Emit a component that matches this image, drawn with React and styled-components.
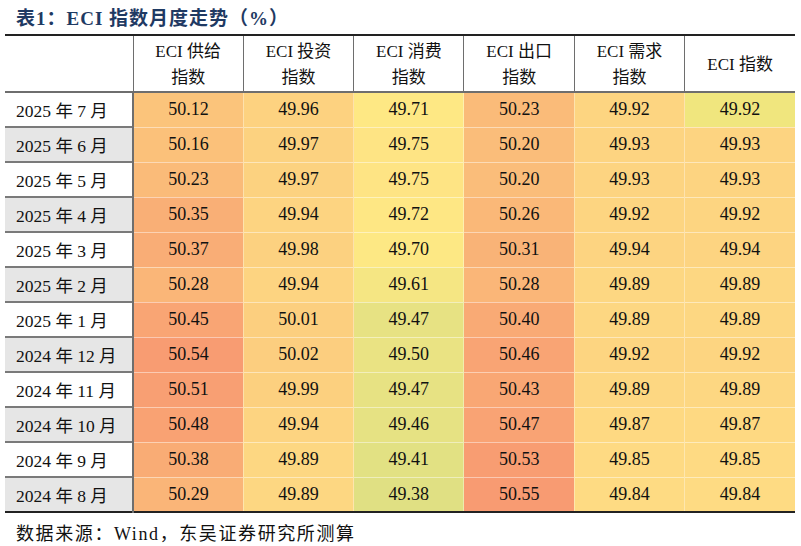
import React from 'react'
import styled, { createGlobalStyle } from 'styled-components'

const GlobalStyle = createGlobalStyle`
    body {
        margin: 0;
        background: #ffffff;
        font-family: "Liberation Serif", "Noto Sans CJK SC", serif;
        color: #111;
    }
`

const Page = styled.div`
    width: 801px;
    height: 546px;
    padding: 0 6px 0 5px;
    box-sizing: border-box;
`

const Title = styled.h1`
    margin: 0;
    height: 32px;
    padding: 0 0 2px 11px;
    display: flex;
    align-items: center;
    font-size: 19px;
    font-weight: bold;
    color: #1f3a63;
    letter-spacing: 1px;
`

const Table = styled.table`
    width: 790px;
    border-collapse: collapse;
    table-layout: fixed;
    border-top: 2px solid #222;
    border-bottom: 2px solid #222;
`

const HeadCell = styled.th`
    height: 57px;
    padding: 2px 0 0;
    box-sizing: border-box;
    font-weight: normal;
    font-size: 17px;
    line-height: 26px;
    text-align: center;
    border-bottom: 2px solid #6e6e6e;
    border-left: ${(p) => (p.$first ? 'none' : '1.5px solid #6e6e6e')};
`

const LabelCell = styled.td`
    height: 33px;
    padding: 0 0 0 11px;
    font-size: 17.5px;
    white-space: nowrap;
    background: ${(p) => (p.$shaded ? '#e6e6e6' : '#ffffff')};
    border-top: ${(p) => (p.$top ? 'none' : '2px solid #7a7a7a')};
    border-right: 2px solid #6e6e6e;
`

const ValueCell = styled.td`
    height: 33px;
    padding: 0;
    font-size: 18px;
    text-align: center;
    background: ${(p) => p.$bg};
    border-top: ${(p) => (p.$top ? 'none' : '1px solid rgba(255,255,255,0.45)')};
    border-left: 1px solid rgba(255,255,255,0.35);
`

const Source = styled.div`
    padding: 6px 0 0 11px;
    font-size: 18px;
    letter-spacing: 1.6px;
`

const stops = [
    [49.38, [224, 224, 131]],
    [49.47, [231, 226, 131]],
    [49.61, [245, 230, 131]],
    [49.71, [254, 232, 132]],
    [49.84, [254, 219, 131]],
    [49.92, [253, 213, 129]],
    [50.01, [252, 207, 127]],
    [50.12, [251, 196, 123]],
    [50.23, [250, 187, 121]],
    [50.35, [249, 175, 118]],
    [50.45, [249, 165, 116]],
    [50.55, [248, 155, 114]],
]

const heat = (v) => {
    if (v <= stops[0][0]) return `rgb(${stops[0][1].join(',')})`
    for (let i = 1; i < stops.length; i++) {
        const [v1, c1] = stops[i]
        const [v0, c0] = stops[i - 1]
        if (v <= v1) {
            const t = (v - v0) / (v1 - v0)
            const c = c0.map((x, k) => Math.round(x + (c1[k] - x) * t))
            return `rgb(${c.join(',')})`
        }
    }
    return `rgb(${stops[stops.length - 1][1].join(',')})`
}

const headers = [
    ['ECI 供给', '指数'],
    ['ECI 投资', '指数'],
    ['ECI 消费', '指数'],
    ['ECI 出口', '指数'],
    ['ECI 需求', '指数'],
    ['ECI 指数'],
]

const rows = [
    ['2025 年 7 月', [50.12, 49.96, 49.71, 50.23, 49.92, 49.92]],
    ['2025 年 6 月', [50.16, 49.97, 49.75, 50.2, 49.93, 49.93]],
    ['2025 年 5 月', [50.23, 49.97, 49.75, 50.2, 49.93, 49.93]],
    ['2025 年 4 月', [50.35, 49.94, 49.72, 50.26, 49.92, 49.92]],
    ['2025 年 3 月', [50.37, 49.98, 49.7, 50.31, 49.94, 49.94]],
    ['2025 年 2 月', [50.28, 49.94, 49.61, 50.28, 49.89, 49.89]],
    ['2025 年 1 月', [50.45, 50.01, 49.47, 50.4, 49.89, 49.89]],
    ['2024 年 12 月', [50.54, 50.02, 49.5, 50.46, 49.92, 49.92]],
    ['2024 年 11 月', [50.51, 49.99, 49.47, 50.43, 49.89, 49.89]],
    ['2024 年 10 月', [50.48, 49.94, 49.46, 50.47, 49.87, 49.87]],
    ['2024 年 9 月', [50.38, 49.89, 49.41, 50.53, 49.85, 49.85]],
    ['2024 年 8 月', [50.29, 49.89, 49.38, 50.55, 49.84, 49.84]],
]

// the ECI 指数 cell of the latest month is highlighted separately
const cellColor = (r, c, v) => (r === 0 && c === 5 ? '#f0e67e' : heat(v))

export default function App() {
    return (
        <Page>
            <GlobalStyle />
            <Title>表1：ECI 指数月度走势（%）</Title>
            <Table>
                <colgroup>
                    <col style={{ width: 128 }} />
                    {headers.map((h, i) => <col key={i} />)}
                </colgroup>
                <thead>
                    <tr>
                        <HeadCell $first />
                        {headers.map((h, i) => (
                            <HeadCell key={i}>
                                {h.map((line, j) => <div key={j}>{line}</div>)}
                            </HeadCell>
                        ))}
                    </tr>
                </thead>
                <tbody>
                    {rows.map(([label, vals], r) => (
                        <tr key={label}>
                            <LabelCell $shaded={r % 2 === 1} $top={r === 0}>{label}</LabelCell>
                            {vals.map((v, c) => (
                                <ValueCell key={c} $top={r === 0} $bg={cellColor(r, c, v)}>
                                    {v.toFixed(2)}
                                </ValueCell>
                            ))}
                        </tr>
                    ))}
                </tbody>
            </Table>
            <Source>数据来源：Wind，东吴证券研究所测算</Source>
        </Page>
    )
}
